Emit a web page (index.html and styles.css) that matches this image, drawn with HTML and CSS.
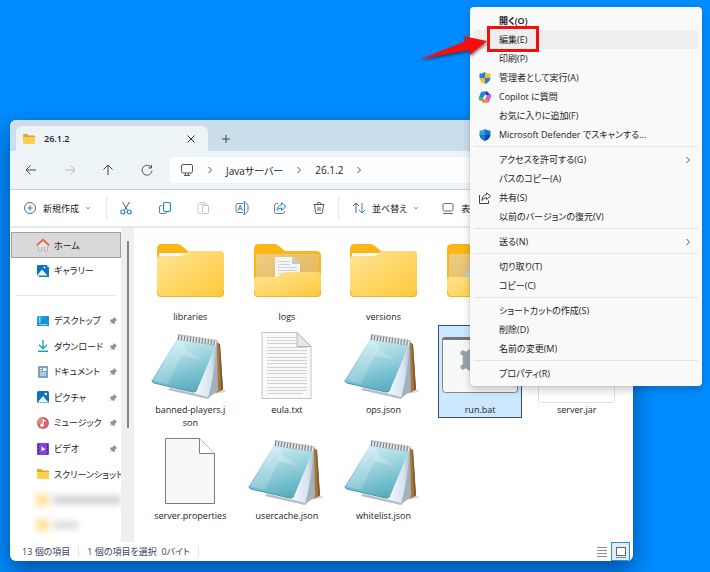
FILE: index.html
```html
<!DOCTYPE html>
<html lang="ja">
<head>
    <meta charset="UTF-8">
    <meta name="viewport" content="width=device-width, initial-scale=1.0">
    <title>26.1.2</title>
    <link rel="stylesheet" href="styles.css">
</head>
<body>
    <!-- Shared icons -->
    <svg class="sprite" aria-hidden="true">
        <defs>
            <linearGradient id="gFolder" x1="0" y1="0" x2="1" y2="1">
                <stop offset="0" stop-color="#ffe596"/>
                <stop offset="1" stop-color="#ffc83a"/>
            </linearGradient>
            <linearGradient id="gInner" x1="0" y1="0" x2="1" y2="1">
                <stop offset="0" stop-color="#edcd84"/>
                <stop offset="1" stop-color="#e2b455"/>
            </linearGradient>
            <linearGradient id="gCover" x1="0.3" y1="0" x2="0.6" y2="1">
                <stop offset="0" stop-color="#d9f2f7"/>
                <stop offset="0.45" stop-color="#9ad3df"/>
                <stop offset="1" stop-color="#56abbd"/>
            </linearGradient>
            <linearGradient id="gBlue" x1="0" y1="0" x2="1" y2="1">
                <stop offset="0" stop-color="#2fb4ee"/>
                <stop offset="1" stop-color="#0668c4"/>
            </linearGradient>
            <linearGradient id="gPage" x1="0" y1="0" x2="1" y2="0">
                <stop offset="0" stop-color="#f4f8fc"/>
                <stop offset="0.75" stop-color="#d5e4f0"/>
                <stop offset="1" stop-color="#b4c2cd"/>
            </linearGradient>
        </defs>
        <symbol id="folder" viewBox="0 0 84 73">
            <path d="M9 12q0-5 5-5h15q3 0 5 2l6 5h31q5 0 5 5v8H9z" fill="#fbb615"/>
            <path d="M11 16h28l-5 6H11z" fill="#f8f8f5"/>
            <path d="M9 22q0-3 3-3h20q3 0 5-2l1-1q2-2 4-2h30q4 0 4 4v38q0 4-4 4H13q-4 0-4-4z" fill="url(#gFolder)"/>
            <path d="M9.500 54v2q0 3.500 3.500 3.500h59q3.500 0 3.500-3.500v-2" fill="none" stroke="#edb52e"/>
        </symbol>
        <symbol id="folder-open" viewBox="0 0 84 73">
            <path d="M9 12q0-5 5-5h15q3 0 5 2l6 5h31q5 0 5 5v31H9z" fill="#fbb615"/>
            <path d="M11 17h63v32H11z" fill="url(#gInner)"/>
        </symbol>
        <symbol id="folder-front" viewBox="0 0 84 73">
            <path d="M9 43q0-3 3-3h18q3 0 5-2l1-1q2-2 4-2h32q4 0 4 4v17q0 4-4 4H13q-4 0-4-4z" fill="url(#gFolder)"/>
            <path d="M9.500 54v2q0 3.500 3.500 3.500h59q3.500 0 3.500-3.500v-2" fill="none" stroke="#edb52e"/>
        </symbol>
        <symbol id="notepad" viewBox="0 0 84 73">
            <ellipse cx="66" cy="61" rx="12" ry="2.500" fill="#000" opacity=".14"/>
            <path d="M69 12l3 2 3 46-7 3z" fill="#a9763c"/>
            <path d="M72 14l3 45-2 1-2-46z" fill="#7d5a30"/>
            <path d="M20 58l40 11 9-10-1-45z" fill="#e8edf0"/>
            <path d="M20 60l40 9 2-2-40-9z" fill="#b7bec4"/>
            <path d="M68 15L47 63l13 4q7-24 8-52z" fill="url(#gPage)"/>
            <path d="M68 15l1 1 1 45-10 7q7-25 8-53z" fill="#a3b1bd"/>
            <path d="M31 7l36 7q1 1 0 3L49 60q-1 2-4 2L6 53q-3-1-2-3L29 9z" fill="url(#gCover)"/>
            <path d="M31 9L6 50l14 4L38 16z" fill="#fff" opacity=".18"/>
            <path d="M36 18l18 12-23-5-10 20z" fill="#fff" opacity=".22"/>
            <path d="M4 50q0 2 2 3l39 9q3 0 4-2" fill="none" stroke="#4597a9"/>
            <path d="M31 7l38 6" stroke="#e6eaec" stroke-width="5"/>
            <path d="M30 7l39 6" stroke="#777d82" stroke-width="6" stroke-dasharray="1.200 1.800"/>
            <path d="M31 5l38 6" stroke="#b9bec1"/>
        </symbol>
        <symbol id="text-page" viewBox="0 0 84 73">
            <path d="M17 2.500h35l14 14v52H17z" fill="#f9f9f9" stroke="#c5c5c5"/>
            <path d="M22 7.500h29M22 10.500h29M22 13.500h29M22 17.500h40M22 20.500h40M22 23.500h40M22 27.500h40M22 30.500h40M22 33.500h40M22 37.500h40M22 40.500h40M22 43.500h40M22 47.500h40M22 50.500h40M22 53.500h40M22 57.500h40M22 60.500h40M22 63.500h36" stroke="#cfd1d4"/>
            <path d="M52 2.500v14h14z" fill="#e6e6e6" stroke="#b5b5b5"/>
        </symbol>
        <symbol id="blank-page" viewBox="0 0 84 73">
            <path d="M17.500 2.500h34l15 15v50h-49z" fill="#f8f8f8" stroke="#7d7d7d"/>
            <path d="M51.500 2.500v15h15" fill="#fff" stroke="#7d7d7d"/>
        </symbol>
        <symbol id="small-folder" viewBox="0 0 14 14">
            <path d="M1 3q0-1 1-1h3l2 1.500h5q1 0 1 1V6H1z" fill="#e9a51c"/>
            <path d="M1 5h12v6q0 1-1 1H2q-1 0-1-1z" fill="#ffcf4f"/>
        </symbol>
        <symbol id="pin" viewBox="0 0 10 10">
            <path d="M5.500 1l3.500 3.500-1.200.5-1.300 1.300-.3 2L5 9.200 3.300 7.300 1 9.300.7 9 2.700 6.700.8 5 2 3.800l2-.3L5.200 2.200z" fill="#84929d"/>
        </symbol>
        <symbol id="right" viewBox="0 0 8 8">
            <path d="M2.500 1l3 3-3 3" fill="none" stroke="#555"/>
        </symbol>
        <symbol id="down" viewBox="0 0 6 6">
            <path d="M1 2l2 2 2-2" fill="none" stroke="#9a9a9a"/>
        </symbol>
        <symbol id="picture" viewBox="0 0 14 14">
            <rect x="1" y="1" width="12" height="12" rx="1.500" fill="#0d70c8"/>
            <path d="M1.500 12.500L7 6l5.500 6.500z" fill="#e8f5fd"/>
            <circle cx="9.800" cy="4" r="1.300" fill="#fff"/>
        </symbol>
    </svg>

    <main class="window">
        <header class="tabs">
            <div class="tab">
                <svg class="icon"><use href="#small-folder"/></svg>
                <span class="tab-title">26.1.2</span>
                <button class="plain" aria-label="タブを閉じる">
                    <svg class="icon-sm" viewBox="0 0 10 10"><path d="M1.500 1.500l7 7m0-7l-7 7" fill="none" stroke="#333"/></svg>
                </button>
            </div>
            <button class="plain new-tab" aria-label="新しいタブ">
                <svg class="icon-sm" viewBox="0 0 10 10"><path d="M5 1v8M1 5h8" fill="none" stroke="#444"/></svg>
            </button>
        </header>

        <div class="navbar">
            <div class="nav-buttons">
                <button class="plain" aria-label="戻る"><svg class="icon" viewBox="0 0 14 14"><path d="M12 7H2m4.500-4.500L2 7l4.500 4.500" fill="none" stroke="#444"/></svg></button>
                <button class="plain" aria-label="進む"><svg class="icon" viewBox="0 0 14 14"><path d="M2 7h10M7.500 2.500L12 7l-4.500 4.500" fill="none" stroke="#b5babd"/></svg></button>
                <button class="plain" aria-label="上へ"><svg class="icon" viewBox="0 0 14 14"><path d="M7 12V2M2.500 6.500L7 2l4.500 4.500" fill="none" stroke="#444"/></svg></button>
                <button class="plain" aria-label="最新の情報に更新"><svg class="icon" viewBox="0 0 14 14"><path d="M11.500 5A5 5 0 1 0 12 7.500M11.500 1.800V5H8.300" fill="none" stroke="#555"/></svg></button>
            </div>
            <nav class="address">
                <svg class="icon" viewBox="0 0 14 14"><rect x="1.500" y="1.500" width="11" height="8.500" rx="1.500" fill="none" stroke="#555"/><path d="M5.500 10v2.500m3-2.500v2.500M4 12.500h6" stroke="#555"/></svg>
                <svg class="crumb-arrow"><use href="#right"/></svg>
                <a href="#">Javaサーバー</a>
                <svg class="crumb-arrow"><use href="#right"/></svg>
                <a href="#">26.1.2</a>
                <svg class="crumb-arrow"><use href="#right"/></svg>
            </nav>
        </div>

        <div class="toolbar">
            <button class="tool-text new">
                <svg class="icon" viewBox="0 0 14 14"><circle cx="7" cy="7" r="5.500" fill="none" stroke="#666"/><path d="M7 4.300v5.400M4.300 7h5.400" stroke="#1b88d8" stroke-width="1.100"/></svg>
                新規作成
                <svg class="chevron"><use href="#down"/></svg>
            </button>
            <div class="tool-icons">
                <button class="plain" aria-label="切り取り"><svg class="icon" viewBox="0 0 14 14"><path d="M3.500 1l5.300 8.500M10.500 1L5.200 9.500" stroke="#5b5b5b" fill="none"/><circle cx="3.800" cy="11" r="2" fill="none" stroke="#1b88d8" stroke-width="1.200"/><circle cx="10.200" cy="11" r="2" fill="none" stroke="#1b88d8" stroke-width="1.200"/></svg></button>
                <button class="plain" aria-label="コピー"><svg class="icon" viewBox="0 0 14 14"><path d="M4 4.500H3q-1.500 0-1.500 1.500v5q0 1.500 1.500 1.500h4q1.500 0 1.500-1.500v-.5" fill="none" stroke="#777"/><rect x="5.500" y="1.500" width="7" height="9" rx="1.500" fill="#fff" stroke="#1b88d8" stroke-width="1.200"/></svg></button>
                <button class="plain" aria-label="貼り付け"><svg class="icon" viewBox="0 0 14 14"><path d="M5.500 12.500H3q-1 0-1-1v-8q0-1 1-1h1m5 0h1q1 0 1 1v1M4 1.500h5v2H4z" fill="none" stroke="#cfcfcf"/><rect x="6.500" y="4.500" width="6" height="8" rx="1" fill="#fff" stroke="#9dcdeb"/></svg></button>
                <button class="plain" aria-label="名前の変更"><svg class="icon" viewBox="0 0 14 14"><path d="M8 2.500H3Q1 2.500 1 4.500v5q0 2 2 2h5m3-9q2 0 2 2v5q0 2-2 2" fill="none" stroke="#777"/><path d="M3 9.500l2.200-5.300 2.200 5.300M3.800 7.800h2.800M9.500 1v12M8 1h3M8 13h3" fill="none" stroke="#1b88d8"/></svg></button>
                <button class="plain" aria-label="共有"><svg class="icon" viewBox="0 0 14 14"><path d="M5 2.500H3.500q-2 0-2 2v6q0 2 2 2h6q2 0 2-2V10" fill="none" stroke="#777"/><path d="M8.500 1.500L13 5.500l-4.500 4V7.200Q5.500 7 4 9.500 4.300 4.500 8.500 3.800z" fill="#dff1fc" stroke="#1b88d8" stroke-linejoin="round"/></svg></button>
                <button class="plain" aria-label="削除"><svg class="icon" viewBox="0 0 14 14"><path d="M1.500 3.500h11M5 3.300q0-2 2-2t2 2M2.500 3.500l1 7.500q.2 1.500 1.500 1.500h4q1.300 0 1.500-1.500l1-7.500M6 6v4m2-4v4" fill="none" stroke="#5b5b5b"/></svg></button>
            </div>
            <button class="tool-text">
                <svg class="icon" viewBox="0 0 14 14"><path d="M4 12V2M1 5l3-3 3 3" fill="none" stroke="#5b5b5b"/><path d="M10 2v10M7 9l3 3 3-3" fill="none" stroke="#1b88d8"/></svg>
                並べ替え
                <svg class="chevron"><use href="#down"/></svg>
            </button>
            <button class="tool-text view">
                <svg class="icon" viewBox="0 0 14 14"><rect x="2" y="2.500" width="10" height="7.500" rx="1.500" fill="none" stroke="#666"/><path d="M2 12.500h10" stroke="#666"/></svg>
                表示
            </button>
        </div>

        <div class="content">
            <aside class="sidebar">
                <nav class="places">
                    <a class="place active" href="#"><svg class="icon" viewBox="0 0 14 14"><path d="M2.500 6.500L7 3l4.500 3.500V13h-3V9h-3v4h-3z" fill="#e4e3e5"/><path d="M2.500 8v5h3V9m3 0v4h3V8" fill="none" stroke="#a9a9b0" stroke-width=".8"/><path d="M.8 7.300L7 1.800l6.200 5.500" fill="none" stroke="#e0653a" stroke-width="1.800"/></svg><span>ホーム</span></a>
                    <a class="place" href="#"><svg class="icon" viewBox="0 0 14 14"><path d="M11 3h2v10H3v-1h8z" fill="#2c6fb5"/><rect x="1" y="1" width="10.500" height="10.500" rx="1" fill="#0d70c8"/><path d="M1.500 11L6 5.500l5 5.500z" fill="#e8f5fd"/><circle cx="8.500" cy="3.500" r="1" fill="#fff"/></svg><span>ギャラリー</span></a>
                    <hr>
                    <div class="pinned">
                        <a class="place" href="#"><svg class="icon" viewBox="0 0 14 14"><rect x="1" y="2" width="12" height="10" rx="1" fill="url(#gBlue)"/><path d="M3 4h1.500M3 6h1.500M3 8h1.500" stroke="#fff"/><path d="M5 12l8-8v8z" fill="#1c93dc"/><path d="M3 10.500h8" stroke="#9adcf8"/></svg><span>デスクトップ</span><svg class="pin"><use href="#pin"/></svg></a>
                        <a class="place" href="#"><svg class="icon" viewBox="0 0 14 14"><path d="M7 1v8.500M3 5.800l4 4 4-4M2 12.300h10" fill="none" stroke="#2a9dad" stroke-width="1.400"/></svg><span>ダウンロード</span><svg class="pin"><use href="#pin"/></svg></a>
                        <a class="place" href="#"><svg class="icon" viewBox="0 0 14 14"><rect x="2" y="1" width="10" height="12" rx="1" fill="#7d9fc4"/><path d="M4 3.500h2M4 5.500h2M4 8h6M4 10h6" stroke="#eef4fa"/><rect x="7" y="3" width="3.500" height="3" fill="#eef4fa"/></svg><span>ドキュメント</span><svg class="pin"><use href="#pin"/></svg></a>
                        <a class="place" href="#"><svg class="icon"><use href="#picture"/></svg><span>ピクチャ</span><svg class="pin"><use href="#pin"/></svg></a>
                        <a class="place" href="#"><svg class="icon" viewBox="0 0 14 14"><circle cx="7" cy="7" r="6" fill="#d0616b"/><path d="M7 1a6 6 0 0 0-6 6l6 2z" fill="#e58a75"/><circle cx="6" cy="9.200" r="1.700" fill="#fff"/><path d="M7.300 9V3.200q.5 1.800 2.400 2.200" fill="none" stroke="#fff" stroke-width="1.100"/></svg><span>ミュージック</span><svg class="pin"><use href="#pin"/></svg></a>
                        <a class="place" href="#"><svg class="icon" viewBox="0 0 14 14"><rect x="1" y="1" width="12" height="12" rx="1" fill="#8544dc"/><path d="M2.500 2v10M11.500 2v10" stroke="#3d1c78" stroke-width="1.300" stroke-dasharray="1.500 1.300"/><path d="M5.500 4.500v5l4-2.500z" fill="#fff"/></svg><span>ビデオ</span><svg class="pin"><use href="#pin"/></svg></a>
                        <a class="place" href="#"><svg class="icon"><use href="#small-folder"/></svg><span>スクリーンショット</span></a>
                        <div class="place hidden-place"><i class="smudge-icon"></i><i class="smudge"></i></div>
                        <div class="place hidden-place"><i class="smudge-icon"></i><i class="smudge short"></i></div>
                    </div>
                </nav>
                <div class="scrollbar"><div class="thumb"></div></div>
            </aside>

            <section class="files">
                <button class="file"><svg class="file-icon"><use href="#folder"/></svg><span>libraries</span></button>
                <button class="file"><svg class="file-icon" viewBox="0 0 84 73"><use href="#folder-open"/><path d="M30 20h17l8 7v18H30z" fill="#f4f6f7"/><path d="M47 20v7h8z" fill="#c4c9cc"/><path d="M33 24.500h12M33 27.500h12M33 30.500h19M33 33.500h19M33 36.500h19" stroke="#ccd0d4"/><use href="#folder-front"/></svg><span>logs</span></button>
                <button class="file"><svg class="file-icon"><use href="#folder"/></svg><span>versions</span></button>
                <button class="file" aria-label="フォルダー"><svg class="file-icon" viewBox="0 0 84 73"><use href="#folder-open"/><path d="M36 20L27 40h20V20z" fill="#a5dae6"/><use href="#folder-front"/></svg></button>
                <button class="file" aria-label="フォルダー"><svg class="file-icon"><use href="#folder"/></svg></button>
                <button class="file"><svg class="file-icon"><use href="#notepad"/></svg><span>banned-players.json</span></button>
                <button class="file"><svg class="file-icon"><use href="#text-page"/></svg><span>eula.txt</span></button>
                <button class="file"><svg class="file-icon"><use href="#notepad"/></svg><span>ops.json</span></button>
                <button class="file selected"><svg class="file-icon" viewBox="0 0 84 73"><rect x="4.500" y="7.500" width="75" height="55" rx="3" fill="#f8f8f8" stroke="#838589"/><path d="M4 10q0-3 3-3h70q3 0 3 3z" fill="#74777b"/><circle cx="36" cy="30" r="8" fill="none" stroke="#9ba2a9" stroke-width="7"/><path d="M28 25l-3-2m3 12l-3 2" stroke="#9ba2a9" stroke-width="5" stroke-linecap="round"/></svg><span>run.bat</span></button>
                <button class="file"><svg class="file-icon" viewBox="0 0 84 73"><rect x="3.500" y="2.500" width="76" height="70" rx="1" fill="#fff" stroke="#dedede"/></svg><span>server.jar</span></button>
                <button class="file"><svg class="file-icon"><use href="#blank-page"/></svg><span>server.properties</span></button>
                <button class="file"><svg class="file-icon"><use href="#notepad"/></svg><span>usercache.json</span></button>
                <button class="file"><svg class="file-icon"><use href="#notepad"/></svg><span>whitelist.json</span></button>
            </section>
        </div>

        <footer class="status">
            <span class="status-item">13 個の項目</span>
            <span class="status-item">1 個の項目を選択&nbsp; 0バイト</span>
            <div class="view-buttons">
                <button class="plain" aria-label="詳細"><svg class="icon" viewBox="0 0 14 14"><path d="M2 2.500h10M2 5.500h10M2 8.500h10M2 11.500h10" stroke="#8a8a8a"/></svg></button>
                <button class="plain current" aria-label="大アイコン"><svg class="icon" viewBox="0 0 14 14"><rect x="2.500" y="2.500" width="9" height="8" fill="#fff" stroke="#666"/><path d="M2 12.500h10" stroke="#888"/></svg></button>
            </div>
        </footer>
    </main>

    <div class="menu" role="menu">
        <button class="item default" role="menuitem"><i></i>開く(O)</button>
        <button class="item hover" role="menuitem"><i></i>編集(E)</button>
        <button class="item" role="menuitem"><i></i>印刷(P)</button>
        <button class="item" role="menuitem"><svg class="icon" viewBox="0 0 14 14"><path d="M7 1q2.500 1.700 5.500 1.800V7H7z" fill="#f8bd2b"/><path d="M7 1Q4.500 2.700 1.500 2.800V7H7z" fill="#1b83d8"/><path d="M1.500 7H7v6Q2 11 1.500 7z" fill="#f8bd2b"/><path d="M12.500 7H7v6q5-2 5.500-6z" fill="#1b83d8"/></svg>管理者として実行(A)</button>
        <button class="item" role="menuitem"><svg class="icon" viewBox="0 0 14 14"><path d="M4.500 1.500h4q1.500 0 2 1.500l.6 2H8L6 10.500H3q-2.500 0-2.200-2.500L2.500 3q.5-1.500 2-1.500z" fill="#2388e8"/><path d="M1 6.500L.8 8q-.3 2.500 2.200 2.500h3L7 7.500z" fill="#47b86a"/><path d="M9.500 12.500h-4q-1.500 0-2-1.500L3 9.500h3.500l2-6H11q2.500 0 2.200 2.500L11.500 11q-.5 1.500-2 1.500z" fill="#d45bd0"/><path d="M3 9.500h3.500l1-3 2.500 6H5.500q-1.500 0-2-1.500z" fill="#f79138"/><path d="M8.500 1.500q1.500 0 2 1.500l.6 2H8l-.5-3.500z" fill="#233cb5"/><path d="M5.800 9L8 5" stroke="#fff" stroke-width="2"/></svg>Copilot に質問</button>
        <button class="item" role="menuitem"><i></i>お気に入りに追加(F)</button>
        <button class="item" role="menuitem"><svg class="icon" viewBox="0 0 14 14"><path d="M7 1Q4.500 2.700 1.500 2.800V7Q2 11 7 13z" fill="#2aa0ec"/><path d="M7 1q2.500 1.700 5.500 1.800V7H7z" fill="#1673cb"/><path d="M12.500 7H7v6q5-2 5.500-6z" fill="#0b4d9c"/><path d="M1.500 7H7v6Q2 11 1.500 7z" fill="#1879d2"/></svg>Microsoft Defender でスキャンする...</button>
        <hr>
        <button class="item" role="menuitem"><i></i>アクセスを許可する(G)<svg class="sub"><use href="#right"/></svg></button>
        <button class="item" role="menuitem"><i></i>パスのコピー(A)</button>
        <button class="item" role="menuitem"><svg class="icon" viewBox="0 0 14 14"><path d="M1.500 4v8.500h9V9.500" fill="none" stroke="#444"/><path d="M8.500 1.800l4 3.400-4 3.400V6.700Q5.500 6.500 4 9.500 4 4 8.500 3.600z" fill="none" stroke="#444"/></svg>共有(S)</button>
        <button class="item" role="menuitem"><i></i>以前のバージョンの復元(V)</button>
        <hr>
        <button class="item" role="menuitem"><i></i>送る(N)<svg class="sub"><use href="#right"/></svg></button>
        <hr>
        <button class="item" role="menuitem"><i></i>切り取り(T)</button>
        <button class="item" role="menuitem"><i></i>コピー(C)</button>
        <hr>
        <button class="item" role="menuitem"><i></i>ショートカットの作成(S)</button>
        <button class="item" role="menuitem"><i></i>削除(D)</button>
        <button class="item" role="menuitem"><i></i>名前の変更(M)</button>
        <hr>
        <button class="item" role="menuitem"><i></i>プロパティ(R)</button>
    </div>

    <!-- Callout on the edit command -->
    <div class="callout"></div>
    <svg class="arrow" viewBox="0 0 72 28" aria-hidden="true">
        <path d="M2 25.500L49 7l-3-5 24 5-17 14-1-5z" fill="#f80c0c"/>
    </svg>
</body>
</html>
```
FILE: styles.css
```css
* {
    box-sizing: border-box;
}
body {
    margin: 0;
    min-height: 100vh;
    position: relative;
    overflow: hidden;
    background: #008cff;
    color: #222;
    font-family: "Open Sans", "Noto Sans CJK JP", sans-serif;
    font-size: 9px;
    font-feature-settings: "palt";
}
button {
    font: inherit;
    font-feature-settings: inherit;
    color: inherit;
    border: 0;
    padding: 0;
    background: none;
}
a {
    color: inherit;
    text-decoration: none;
}
hr {
    margin: 0;
    border: 0;
    background: #e3e3e3;
    height: 1px;
}
svg {
    flex: none;
    display: block;
}
.sprite {
    position: absolute;
    width: 0;
    height: 0;
}
.icon {
    width: 14px;
    height: 14px;
}
.icon-sm {
    width: 10px;
    height: 10px;
}
.plain {
    display: flex;
    align-items: center;
    justify-content: center;
}

/* Explorer window */
.window {
    position: absolute;
    top: 120px;
    left: 10px;
    right: 77px;
    bottom: 11px;
    display: flex;
    flex-direction: column;
    overflow: hidden;
    background: #fff;
    border-radius: 6px;
    box-shadow: 0 0 1px #0a4f90, 0 10px 24px rgba(0, 20, 60, 0.5);
}
.tabs {
    display: flex;
    flex: none;
    height: 31px;
    padding: 6px 6px 0;
    background: #cbdeeb;
}
.tab {
    display: flex;
    align-items: center;
    width: 192px;
    padding: 0 12px 0 6px;
    gap: 8px;
    background: #edf4f8;
    border-radius: 6px 6px 0 0;
}
.tab-title {
    flex: 1;
    font-weight: 600;
}
.new-tab {
    width: 36px;
}
.navbar {
    display: flex;
    flex: none;
    align-items: center;
    height: 39px;
    background: #edf4f8;
    border-bottom: 1px solid #c3d5e1;
}
.nav-buttons {
    display: flex;
    width: 160px;
    padding: 0 4px 0 2px;
}
.nav-buttons .plain {
    flex: 1;
    height: 26px;
}
.address {
    display: flex;
    flex: 1;
    align-items: center;
    gap: 12px;
    height: 26px;
    padding-left: 10px;
    background: #fbfdfe;
    border-radius: 4px;
    font-size: 10px;
}
.crumb-arrow {
    width: 8px;
    height: 8px;
}
.toolbar {
    display: flex;
    flex: none;
    align-items: center;
    height: 38px;
    border-bottom: 2px solid #e4eaf0;
}
.tool-text {
    display: flex;
    align-items: center;
    gap: 6px;
    padding-left: 13px;
    white-space: nowrap;
}
.tool-text.new {
    width: 96px;
}
.tool-text.view {
    padding-left: 22px;
}
.chevron {
    width: 6px;
    height: 6px;
}
.tool-icons {
    display: flex;
    width: 233px;
    border: solid #e9e9e9;
    border-width: 0 1px;
}
.tool-icons .plain {
    flex: 1;
    height: 24px;
}
.content {
    display: flex;
    flex: 1;
    min-height: 0;
}

/* Navigation pane */
.sidebar {
    display: flex;
    width: 124px;
}
.places {
    display: flex;
    flex: 1;
    flex-direction: column;
    min-width: 0;
    padding: 4px 0;
}
.places hr {
    margin: 12px 6px;
}
.place {
    display: flex;
    align-items: center;
    height: 25px;
    gap: 4px;
    padding: 0 2px 0 26px;
    white-space: nowrap;
}
.place.active {
    height: 26px;
    margin-left: 1px;
    padding-left: 24px;
    background: #d9d9d9;
    border: 1px solid #a0a0a0;
}
.pinned {
    display: grid;
    flex: 1;
    grid-auto-rows: 1fr;
    align-items: center;
}
.pinned .place {
    padding-right: 3px;
    min-width: 0;
}
.pin {
    width: 9px;
    height: 9px;
    margin-left: auto;
}
.pinned .hidden-place {
    overflow: hidden;
    padding-right: 0;
}
.smudge-icon,
.smudge {
    width: 13px;
    height: 12px;
    background: #ffe09a;
    filter: blur(3px);
}
.smudge {
    flex: 1;
    height: 8px;
    background: #cfcfcf;
}
.smudge.short {
    flex: none;
    width: 25px;
    background: #dcdcdc;
}
.scrollbar {
    width: 13px;
    padding: 13px 5px 0 6px;
    background: #efefef;
}
.thumb {
    height: 62%;
    background: #858585;
}

/* Files */
.files {
    display: grid;
    flex: 1;
    grid-template-columns: repeat(5, 1fr);
    align-content: start;
    justify-items: center;
    align-items: start;
    padding: 4px 8px 0;
}
.file {
    display: flex;
    flex-direction: column;
    align-items: center;
    width: 84px;
    min-height: 93px;
    padding: 5px 0 2px;
    line-height: 13px;
}
.file span {
    width: 74px;
    overflow-wrap: anywhere;
    word-break: break-all;
}
.file-icon {
    width: 84px;
    height: 73px;
}
.file.selected {
    background: #cce8ff;
    box-shadow: inset 0 0 0 1px #34506b;
}
.status {
    display: flex;
    flex: none;
    align-items: center;
    height: 19px;
    padding: 0 3px 0 4px;
    color: #34445c;
}
.status-item {
    padding: 0 8px;
    border-right: 1px solid #e6e6e6;
    line-height: 11px;
}
.view-buttons {
    display: flex;
    margin-left: auto;
}
.view-buttons .plain {
    width: 19px;
    height: 19px;
}
.view-buttons .current {
    background: #ddeefa;
    border: 1px solid #2b8fd8;
}

/* Context menu */
.menu {
    position: absolute;
    top: 7px;
    left: 470px;
    width: 232px;
    padding: 4px 4px 3px;
    background: #f9f9f9;
    border-radius: 4px;
    box-shadow: 0 0 1px #6b7d8c, 0 4px 8px rgba(0, 0, 0, 0.2);
}
.menu hr {
    margin: 2px 0 3px;
}
.item {
    display: flex;
    align-items: center;
    width: 100%;
    height: 19px;
    gap: 7px;
    padding: 0 6px 0 4px;
    border-radius: 3px;
    white-space: nowrap;
}
.item i {
    width: 14px;
}
.item.default {
    font-weight: 600;
}
.item.hover {
    background: #eeeeee;
}
.sub {
    width: 8px;
    height: 8px;
    margin-left: auto;
}

.callout {
    position: absolute;
    top: 26px;
    left: 487px;
    width: 52px;
    height: 26px;
    border: 3px solid #f80c0c;
}
.arrow {
    position: absolute;
    top: 34px;
    left: 417px;
    width: 72px;
    height: 28px;
    filter: drop-shadow(1px 2px 1px rgba(0, 0, 0, 0.4));
}
```
